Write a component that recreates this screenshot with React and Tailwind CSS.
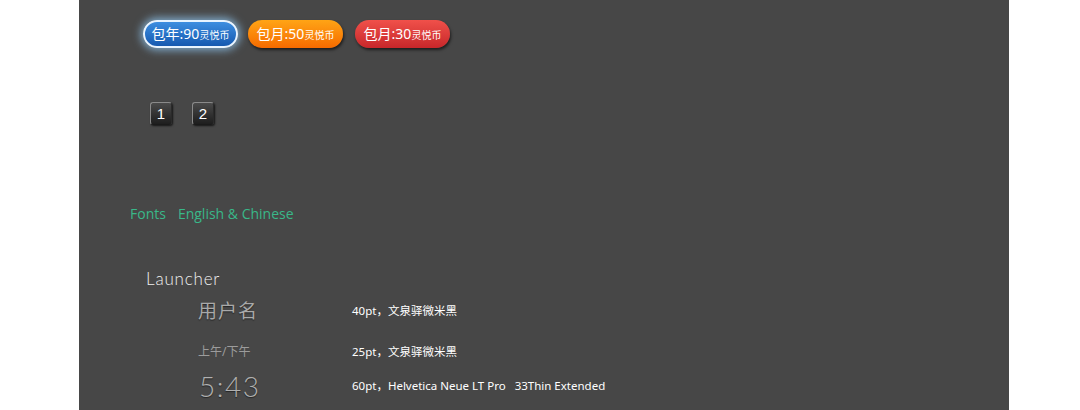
export default function App() {
  const cjk = { fontFamily: '"Noto Sans", "Noto Sans CJK SC", sans-serif' };
  const thin = { fontFamily: 'Lato, "Liberation Sans", sans-serif' };
  return (
    <div className="w-[1080px] h-[410px] bg-white overflow-hidden">
      <div className="ml-[79px] w-[930px] h-[410px] bg-[#474747] flex flex-col" style={cjk}>
        {/* Buttons */}
        <div className="flex gap-[10px] pl-[64px] pt-[20px]">
          <div className="w-[95px] h-[28px] rounded-full border-2 border-[#e8f4ff] bg-gradient-to-b from-[#3d8ee0] to-[#1559b0] shadow-[0_0_8px_2px_rgba(150,210,255,0.75)] flex items-center justify-center text-white">
            <span className="text-[14px] leading-none">包年:90</span>
            <span className="text-[10px] leading-none mt-[2px]">灵悦币</span>
          </div>
          <div className="w-[95px] h-[28px] rounded-full bg-gradient-to-b from-[#ffa415] to-[#f56a00] shadow-[1px_2px_3px_rgba(0,0,0,0.6)] flex items-center justify-center text-white">
            <span className="text-[14px] leading-none">包月:50</span>
            <span className="text-[10px] leading-none mt-[2px]">灵悦币</span>
          </div>
          <div className="ml-[2px] w-[95px] h-[28px] rounded-full bg-gradient-to-b from-[#f0504a] to-[#c8262a] shadow-[1px_2px_3px_rgba(0,0,0,0.6)] flex items-center justify-center text-white">
            <span className="text-[14px] leading-none">包月:30</span>
            <span className="text-[10px] leading-none mt-[2px]">灵悦币</span>
          </div>
        </div>
        {/* Number keys */}
        <div className="flex gap-[20px] pl-[71px] mt-[54px]">
          {["1", "2"].map((n) => (
            <div
              key={n}
              className="w-[22px] h-[23px] rounded-[3px] border border-[#8a8a8a] border-b-[#1a1a1a] border-r-[#2a2a2a] bg-gradient-to-b from-[#4a4a4a] to-[#1e1e1e] shadow-[1px_1px_2px_rgba(0,0,0,0.7)] flex items-center justify-center text-white text-[15px] leading-none"
              style={{ fontFamily: '"Liberation Sans", sans-serif' }}
            >
              {n}
            </div>
          ))}
        </div>
        {/* Fonts heading */}
        <div className="flex gap-[12px] pl-[51px] mt-[80px] text-[14px] leading-[18px] text-[#39b889]" style={{ fontFamily: '"Open Sans", sans-serif' }}>
          <span>Fonts</span>
          <span>English &amp; Chinese</span>
        </div>
        {/* Launcher */}
        <div className="pl-[67px] mt-[46px] text-[17px] leading-[20px] text-[#f0f0f0] font-light tracking-[0.8px]" style={thin}>
          Launcher
        </div>
        <div className="flex flex-col">
          <div className="flex items-center h-[30px] mt-[7px]">
            <span className="w-[154px] pl-[119px] text-[19px] text-[#a9a9a9] whitespace-nowrap tracking-[1px] [text-shadow:0_1px_1px_rgba(0,0,0,0.5)]">用户名</span>
            <span className="ml-[119px] text-[11.5px] text-white whitespace-nowrap">40pt，文泉驿微米黑</span>
          </div>
          <div className="flex items-center h-[20px] mt-[16px]">
            <span className="w-[154px] pl-[119px] text-[12px] text-[#9c9c9c] whitespace-nowrap">上午/下午</span>
            <span className="ml-[119px] text-[11.5px] text-white whitespace-nowrap">25pt，文泉驿微米黑</span>
          </div>
          <div className="flex items-center h-[30px] mt-[9px]">
            <span className="w-[154px] pl-[120px] text-[28px] text-[#b0b0b0] font-light tracking-[1.5px] whitespace-nowrap [text-shadow:0_1px_1px_rgba(0,0,0,0.5)]" style={thin}>5:43</span>
            <span className="ml-[119px] text-[11.5px] text-white whitespace-nowrap">60pt，Helvetica Neue LT Pro&nbsp;&nbsp;&nbsp;33Thin Extended</span>
          </div>
        </div>
      </div>
    </div>
  );
}
